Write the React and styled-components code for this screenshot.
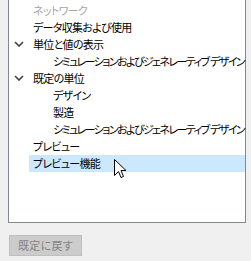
import React from 'react';
import styled, { createGlobalStyle } from 'styled-components';

const GlobalStyle = createGlobalStyle`
    html, body {
        margin: 0;
        padding: 0;
        background: #f0f0f0;
        font-family: "Noto Sans CJK JP", "Noto Sans", sans-serif;
        overflow: hidden;
    }
`

const Page = styled.div`
    width: 251px;
    height: 261px;
    display: flex;
    flex-direction: column;
    padding-left: 8px;
    box-sizing: border-box;
`

const TreePanel = styled.div`
    position: relative;
    width: 238px;
    height: 223px;
    box-sizing: border-box;
    background: #fff;
    border: 1px solid #828790;
    border-top: none;
    padding-top: 2px;
`

const Row = styled.div`
    height: 17px;
    display: flex;
    align-items: center;
    margin-left: 20px;
    padding-left: ${p => p.$indent}px;
    background: ${p => (p.$selected ? '#cce8ff' : 'transparent')};
    color: ${p => (p.$muted ? '#a6a6a6' : '#000')};
    font-size: 11px;
    line-height: 17px;
    white-space: pre;
    font-feature-settings: "palt";
    letter-spacing: ${p => (p.$tight ? '-1.6px' : '-0.7px')};
    position: relative;
`

const Chevron = styled.svg`
    position: absolute;
    left: -15px;
    top: 5px;
`

const Cursor = styled.svg`
    position: absolute;
    left: 105px;
    top: 159px;
`

const Footer = styled.div`
    padding-top: 8px;
    padding-left: 1px;
`

const ResetButton = styled.button`
    width: 73px;
    height: 21px;
    padding: 0;
    background: #cccccc;
    border: 1px solid #bfbfbf;
    color: #838383;
    font-family: "Noto Sans CJK JP", sans-serif;
    font-size: 11px;
    font-feature-settings: "palt";
    letter-spacing: 0.3px;
`

const items = [
    { label: 'ネットワーク', indent: 4, muted: true },
    { label: 'データ収集および使用', indent: 4 },
    { label: '単位と値の表示', indent: 4, open: true },
    { label: 'シミュレーションおよびジェネレーティブ  デザイン', indent: 24, tight: true },
    { label: '既定の単位', indent: 4, open: true },
    { label: 'デザイン', indent: 24 },
    { label: '製造', indent: 24 },
    { label: 'シミュレーションおよびジェネレーティブ  デザイン', indent: 24, tight: true },
    { label: 'プレビュー', indent: 4 },
    { label: 'プレビュー機能', indent: 4, selected: true },
]

export default function App() {
    return (
        <Page>
            <GlobalStyle />
            <TreePanel>
                {items.map((item, i) => (
                    <Row key={i} $indent={item.indent} $muted={item.muted} $selected={item.selected} $tight={item.tight}>
                        {item.open && (
                            <Chevron width="10" height="6" viewBox="0 0 10 6">
                                <polyline points="1,1 5,5 9,1" fill="none" stroke="#404040" strokeWidth="1.6" />
                            </Chevron>
                        )}
                        {item.label}
                    </Row>
                ))}
                <Cursor width="13" height="20" viewBox="0 0 13 20">
                    <path d="M0.5,0.5 L0.5,16.5 L4.5,12.5 L7,18.5 L9.5,17.5 L7,11.5 L12,11.5 Z" fill="#fff" stroke="#000" strokeWidth="1" />
                </Cursor>
            </TreePanel>
            <Footer>
                <ResetButton disabled>既定に戻す</ResetButton>
            </Footer>
        </Page>
    )
}
